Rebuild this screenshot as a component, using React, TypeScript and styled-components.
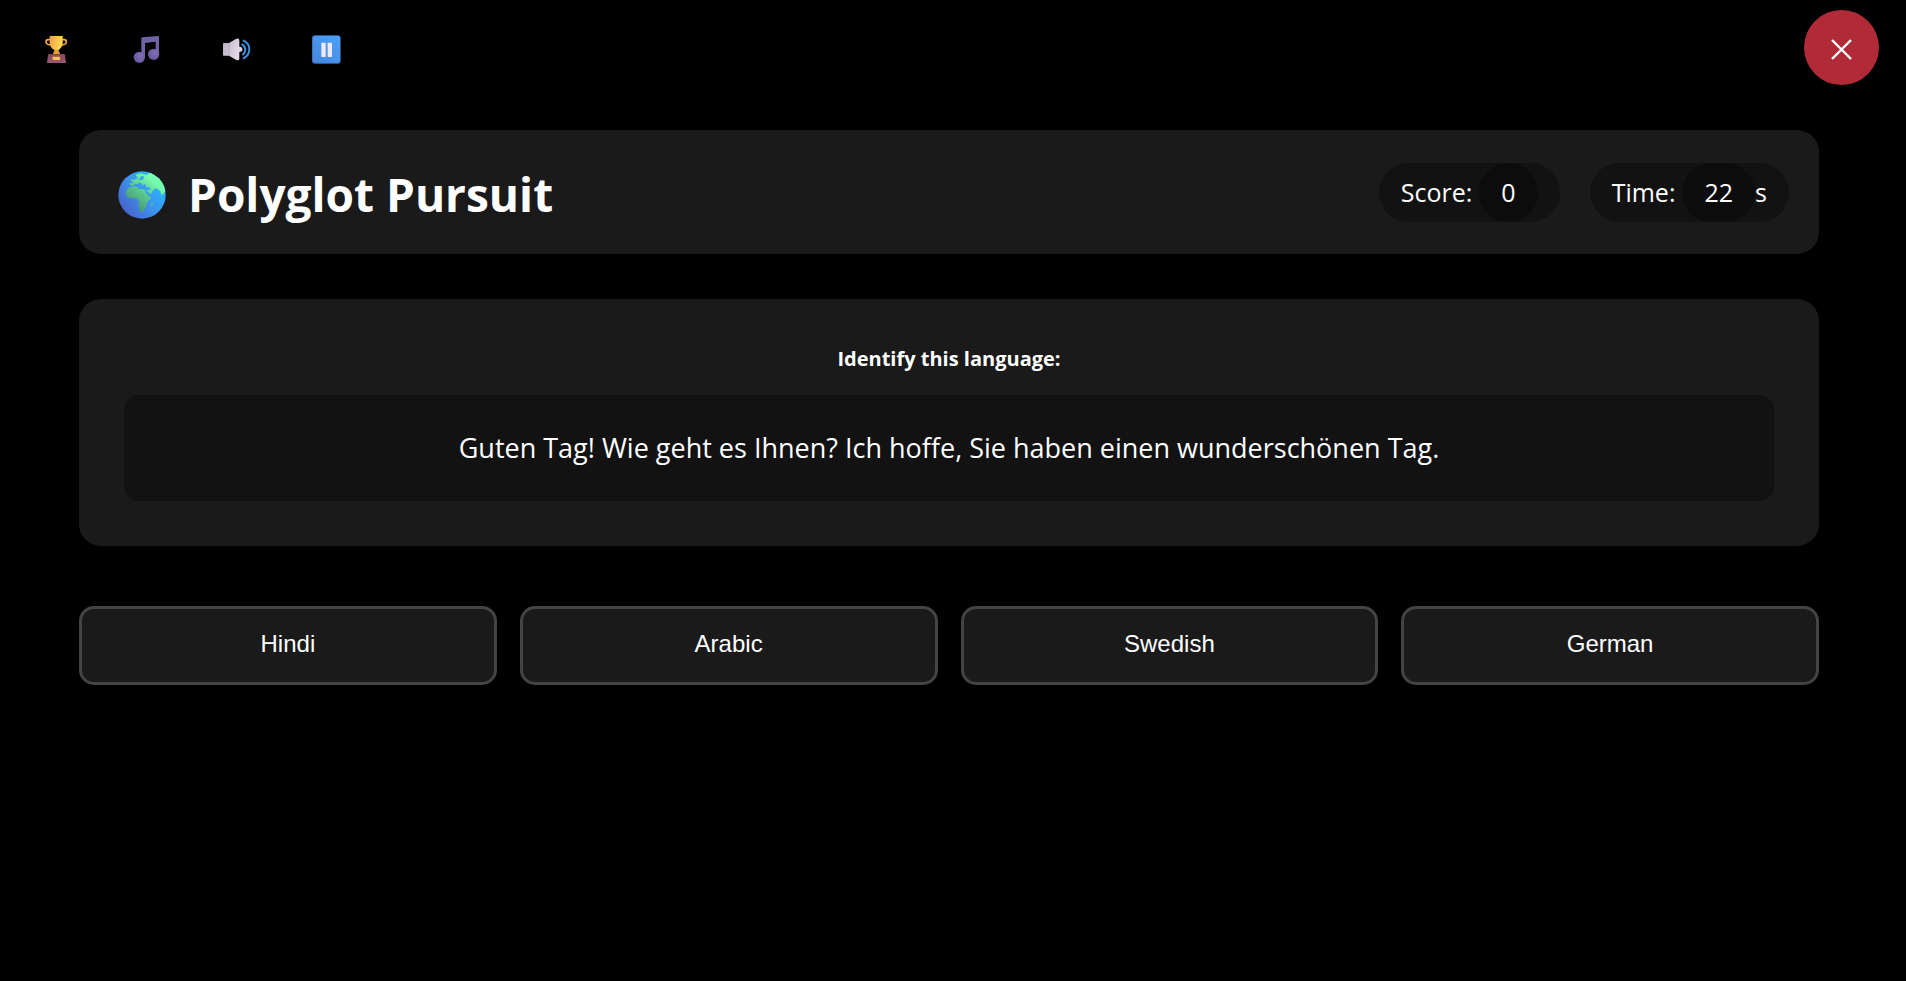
import React from "react";
import styled, { createGlobalStyle } from "styled-components";

const GlobalStyle = createGlobalStyle`
  * { box-sizing: border-box; }
  body {
    margin: 0;
    background: #000;
    color: #fff;
    font-family: "Segoe UI", "Open Sans", "Noto Sans", sans-serif;
  }
`;

const Toolbar = styled.nav`
  display: flex;
  justify-content: space-between;
  align-items: center;
  padding: 10px 27px 0 26px;
`;

const ToolGroup = styled.div`
  display: flex;
  gap: 30px;
  padding-top: 5px;
`;

const ToolButton = styled.button`
  display: flex;
  align-items: center;
  justify-content: center;
  width: 60px;
  height: 60px;
  padding: 0;
  border: 0;
  background: transparent;
  cursor: pointer;
`;

const CloseButton = styled(ToolButton)`
  width: 75px;
  height: 75px;
  border-radius: 50%;
  background: #b02a37;
`;

const Page = styled.main`
  display: flex;
  flex-direction: column;
  padding: 45px 87px 45px 79px;
`;

const Card = styled.section`
  border-radius: 22px;
  background: #1a1a1a;
`;

const Header = styled(Card).attrs({ as: "header" })`
  display: flex;
  align-items: center;
  justify-content: space-between;
  min-height: 124px;
  padding: 0 30px 0 39px;
`;

const Brand = styled.div`
  display: flex;
  align-items: center;
  gap: 22px;
  padding-top: 6px;
`;

const Title = styled.h1`
  margin: 0;
  padding-bottom: 2px;
  font-size: 46px;
  line-height: 64px;
  font-weight: 700;
`;

const Stats = styled.div`
  display: flex;
  gap: 30px;
`;

const Pill = styled.div`
  display: flex;
  align-items: center;
  height: 59px;
  padding: 0 22px;
  border-radius: 30px;
  background: #121212;
  font-size: 25px;
  line-height: 34px;
`;

const PillValue = styled.span`
  display: flex;
  align-items: center;
  height: 59px;
  margin-left: 7px;
  padding: 0 22px;
  border-radius: 30px;
  background: #0c0c0c;
`;

const Question = styled(Card)`
  margin-top: 45px;
  padding: 45px;
  text-align: center;
`;

const Prompt = styled.h2`
  margin: 0 0 21px;
  font-size: 20px;
  line-height: 30px;
  font-weight: 700;
`;

const Phrase = styled.p`
  margin: 0;
  padding: 30px;
  border-radius: 15px;
  background: #121212;
  font-size: 27px;
  line-height: 46px;
`;

const Options = styled.div`
  display: grid;
  grid-template-columns: repeat(4, 1fr);
  gap: 23px;
  margin-top: 60px;
`;

const Option = styled.button`
  height: 79px;
  padding: 0 0 3px;
  border: 3px solid #444;
  border-radius: 15px;
  background: #1a1a1a;
  color: #fff;
  font-family: "Liberation Sans", Arial, sans-serif;
  font-size: 24px;
  cursor: pointer;
`;

const Trophy = () => (
  <svg width="30" height="30" viewBox="33 45 90 90" aria-hidden="true">
    <defs>
      <linearGradient id="cup" x1="0" y1="0.2" x2="1" y2="0.5">
        <stop offset="0" stopColor="#f0a04a" />
        <stop offset="0.6" stopColor="#fcc84c" />
        <stop offset="1" stopColor="#ffe35c" />
      </linearGradient>
      <linearGradient id="plinth" x1="0" y1="0" x2="0" y2="1">
        <stop offset="0" stopColor="#86494f" />
        <stop offset="1" stopColor="#9c5878" />
      </linearGradient>
    </defs>
    <path d="M62 59H54Q48 59 48 66Q49 75 64 75M95 59H103Q109 59 109 66Q108 75 93 75" fill="none" stroke="#f0ac38" strokeWidth="5" />
    <path d="M59 48H98V67C98 79 91 88 85 90C85 95 89 95 89 102H70C70 95 74 95 74 90C66 88 59 79 59 67Z" fill="url(#cup)" />
    <path d="M75 90H84L88 98V102H71V98Z" fill="#e99c2c" />
    <path d="M58 102H101Q104 102 105 106L108 129H51L54 106Q55 102 58 102Z" fill="url(#plinth)" />
    <rect x="68" y="110" width="22" height="10" rx="2" fill="#fbc25c" />
  </svg>
);

const Music = () => (
  <svg width="30" height="30" viewBox="303 45 90 90" aria-hidden="true">
    <defs>
      <radialGradient id="note" cx="0.6" cy="0.4" r="0.6">
        <stop offset="0" stopColor="#8272b4" />
        <stop offset="1" stopColor="#68579c" />
      </radialGradient>
    </defs>
    <path d="M334 56Q334 52 338 52L383 48Q387 48 387 52V104H377V65L345 69V112H334Z" fill="#7162a5" />
    <circle cx="328" cy="112" r="17" fill="url(#note)" />
    <circle cx="371" cy="103" r="17" fill="url(#note)" />
  </svg>
);

const Speaker = () => (
  <svg width="30" height="30" viewBox="63 45 90 90" aria-hidden="true">
    <defs>
      <linearGradient id="horn" x1="0" y1="0" x2="1" y2="0.4">
        <stop offset="0" stopColor="#b9b0c2" />
        <stop offset="1" stopColor="#e0d8e6" />
      </linearGradient>
    </defs>
    <path d="M131 62Q148 71 148 88Q148 106 131 115M127 74Q136 80 136 89Q136 98 129 103" fill="none" stroke="#3b91e4" strokeWidth="6" strokeLinecap="round" />
    <circle cx="119" cy="88" r="8" fill="#dcd3e3" />
    <path d="M71 69H87L109 56Q118 53 118 62V116Q118 123 109 120L87 107H71Q69 107 69 104V72Q69 69 71 69Z" fill="url(#horn)" />
    <path d="M87 69V107" stroke="#a69bb0" strokeWidth="2" />
  </svg>
);

const Pause = () => (
  <svg width="30" height="30" viewBox="333 45 90 90" aria-hidden="true">
    <defs>
      <linearGradient id="key" x1="0" y1="1" x2="1" y2="0">
        <stop offset="0" stopColor="#4585df" />
        <stop offset="1" stopColor="#4ba4f6" />
      </linearGradient>
    </defs>
    <rect x="336" y="46" width="86" height="85" rx="9" fill="#3d6fc4" />
    <rect x="339" y="48" width="81" height="80" rx="7" fill="url(#key)" />
    <rect x="364" y="68" width="13" height="43" rx="2" fill="#f1e8fa" />
    <rect x="383" y="68" width="13" height="43" rx="2" fill="#f1e8fa" />
  </svg>
);

const Close = () => (
  <svg width="25" height="25" viewBox="0 0 25 25" aria-hidden="true">
    <path d="M3 5L22 24M22 5L3 24" stroke="#fff" strokeWidth="2.4" />
  </svg>
);

const Globe = () => (
  <svg width="48" height="48" viewBox="144 153 144 144" aria-hidden="true">
    <defs>
      <linearGradient id="sea" x1="0.2" y1="0.9" x2="0.9" y2="0.35">
        <stop offset="0" stopColor="#4766cc" />
        <stop offset="0.5" stopColor="#3c90ec" />
        <stop offset="1" stopColor="#2eb2fb" />
      </linearGradient>
      <linearGradient id="land" gradientUnits="userSpaceOnUse" x1="190" y1="255" x2="250" y2="180">
        <stop offset="0" stopColor="#489b78" />
        <stop offset="0.5" stopColor="#5cc98f" />
        <stop offset="1" stopColor="#78ffae" />
      </linearGradient>
      <clipPath id="disc"><circle cx="216" cy="225" r="71" /></clipPath>
    </defs>
    <circle cx="216" cy="225" r="71" fill="url(#sea)" />
    <g clipPath="url(#disc)" fill="url(#land)">
      <path d="M237 150L290 165V210L276 226Q272 222 271 214Q266 208 258 204Q254 208 249 210Q247 217 242 222Q236 222 234 216L228 212Q230 208 237 211L242 206L239 202L229 202L227 194L222 192L218 197L214 189L207 188L203 193L197 191L189 198L180 196L179 189L188 190L187 184L180 181L186 177L192 180L202 174L206 179L217 180L222 174L220 168L213 169L208 177L201 177L203 170L197 168L200 163L213 160L222 163L231 165L238 159Z" />
      <path d="M179 202L194 199L203 202L206 207L217 207L224 209L228 219L236 229L243 230L241 238L230 249L228 262L222 271L214 277L208 274L209 263L205 256L207 243L200 236L190 233L178 235L169 228L167 218L172 208Z" />
      <path d="M243 251L248 249L248 256L244 260Z" />
    </g>
  </svg>
);

const tools = [
  { label: "Leaderboard", Icon: Trophy },
  { label: "Music", Icon: Music },
  { label: "Sound", Icon: Speaker },
  { label: "Pause", Icon: Pause },
];

const languages = ["Hindi", "Arabic", "Swedish", "German"];

export default function App() {
  return (
    <>
      <GlobalStyle />
      <Toolbar>
        <ToolGroup>
          {tools.map(({ label, Icon }) => (
            <ToolButton key={label} type="button" aria-label={label}>
              <Icon />
            </ToolButton>
          ))}
        </ToolGroup>
        <CloseButton type="button" aria-label="Close">
          <Close />
        </CloseButton>
      </Toolbar>
      <Page>
        <Header>
          <Brand>
            <Globe />
            <Title>Polyglot Pursuit</Title>
          </Brand>
          <Stats>
            <Pill>
              Score:<PillValue>0</PillValue>
            </Pill>
            <Pill>
              Time:<PillValue>22</PillValue>s
            </Pill>
          </Stats>
        </Header>
        <Question>
          <Prompt>Identify this language:</Prompt>
          <Phrase>Guten Tag! Wie geht es Ihnen? Ich hoffe, Sie haben einen wunderschönen Tag.</Phrase>
        </Question>
        <Options>
          {languages.map((language) => (
            <Option key={language} type="button">
              {language}
            </Option>
          ))}
        </Options>
      </Page>
    </>
  );
}
